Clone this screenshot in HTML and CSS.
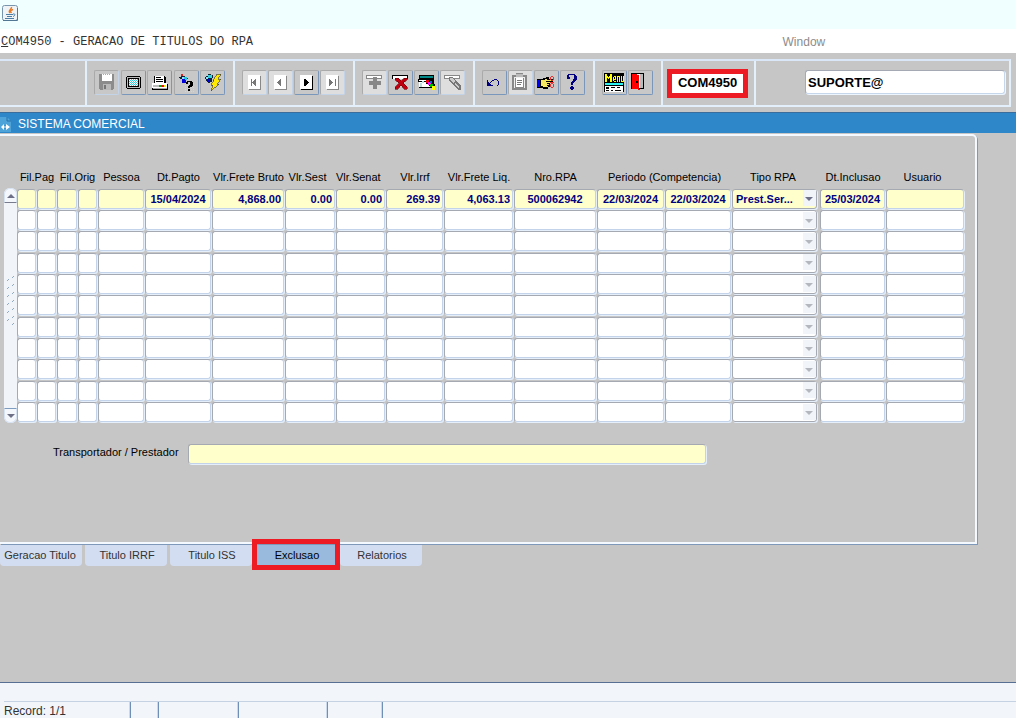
FILE: index.html
```html
<!DOCTYPE html>
<html lang="pt-BR">
<head>
<meta charset="utf-8">
<title>COM4950 - Geracao de Titulos do RPA</title>
<link rel="stylesheet" href="styles.css">
</head>
<body>
<header class="titlebar">
  <svg class="java" width="18" height="18" viewBox="0 0 18 18" aria-hidden="true">
    <rect x="1.500" y="1.500" width="15" height="15" rx="2" fill="#f0f3f6" stroke="#7995ad"/>
    <path d="M2 16.500h14.500V4" fill="none" stroke="#517795"/>
    <path d="M10.500 3C11 5.500 6.500 6 9 9M12 5.500c-3 1-3 2-1.500 3.500" fill="none" stroke="#e87b25" stroke-width="1.500"/>
    <path d="M5 10.500h7M6 12.500h5M4 14.500h9" fill="none" stroke="#4d7ca5" stroke-width="1.200"/>
    <path d="M12 10c3-.5 2 2 0 2.500" fill="none" stroke="#4d7ca5"/>
  </svg>
</header>
<nav class="menubar">
  <span class="menu-title"><u>C</u>OM4950 - GERACAO DE TITULOS DO RPA</span>
  <button class="menu-window" type="button">Window</button>
</nav>

<div class="toolbar">
  <div class="seg seg-blank"></div>
  <div class="seg seg-five">
    <button class="tool off" type="button" aria-label="Salvar"><svg viewBox="0 0 24 24"><path d="M5 4h15v15h-1v1H6v-1H5z" fill="#8c8c8c"/><path d="M8 4h10v7H8z" fill="#fff"/><path d="M9 4h1v1H9zm2 0h1v1h-1zm2 0h1v1h-1zm2 0h1v1h-1z" fill="#aaa"/><path d="M9 14h8v6H9z" fill="#b9b9b9"/><path d="M10 15h2v4h-2z" fill="#777"/></svg></button>
    <button class="tool" type="button" aria-label="Tela"><svg viewBox="0 0 24 24"><path d="M6 6h13v1h1v11h-1v1H6v-1H5V7h1z" fill="#000"/><path d="M6 7h13v11H6z" fill="#bbb"/><path d="M7 8h11v9H7z" fill="#000"/><path d="M8 9h9v7H8z" fill="#fff"/><path d="M8 9.500h9M8 11.500h9M8 13.500h9M8 15.500h9" stroke="#39cfdc" stroke-dasharray="1 1"/><path d="M9 10.500h8M9 12.500h8M9 14.500h8" stroke="#39cfdc" stroke-dasharray="1 1"/></svg></button>
    <button class="tool" type="button" aria-label="Imprimir"><svg viewBox="0 0 24 24"><path d="M7 6h11v1h1v7H7z" fill="#000"/><path d="M8 6h9v7H8z" fill="#fff"/><path d="M9 7h5v1H9zm0 2h7v1H9zm0 2h7v1H9z" fill="#000"/><path d="M5 14h16v6H5z" fill="#000"/><path d="M5 13h15v5H5z" fill="#fff"/><path d="M6 15h13v2H6z" fill="#bbb"/><path d="M12 15h3v2h-3z" fill="#16a512"/><path d="M15 15h2v2h-2z" fill="#f00"/><path d="M17 15h2v2h-2z" fill="#ff0"/><path d="M6 18h14v1H6z" fill="#aaa"/></svg></button>
    <button class="tool" type="button" aria-label="Consultar"><svg viewBox="0 0 24 24"><path d="M7 5h2v1h2v1h2v1h1v1h-2v4h-2v-2H8V9H6V8H5V7h2z" fill="#123"/><path d="M7 4h2v2H7z" fill="#d22"/><path d="M8 7h2v2H8z" fill="#9df"/><path d="M10 7h3v3h-3z" fill="#2cc6df"/><path d="M8 9h3v4H8z" fill="#00d"/><path d="M11 13.500h10M11 15.500h10M11 17.500h10M11 19.500h10M11 21.500h9" stroke="#f5ec00" stroke-dasharray="1 1"/><path d="M13 11h5v1h1v4h-1v1h-2v1h-2v-2h1v-1h1v-3h-2v2h-2v-2h1zm1 8h2v2h-2z" fill="#000"/></svg></button>
    <button class="tool" type="button" aria-label="Executar consulta"><svg viewBox="0 0 24 24"><path d="M8 4h3v1h2v3h-1v4h-2v1H8v-2H6V9H5V7h1V6h2z" fill="#123"/><path d="M8 5h4v3H8z" fill="#39cfdc"/><path d="M6 7h2v2H6z" fill="#9df"/><path d="M7 9h3v3H7z" fill="#00d"/><path d="M17 4h4l-3 5h3l-4 5h2l-8 7 2-6h-2l3-5h-1z" fill="#ffea00" stroke="#333" stroke-width=".6"/></svg></button>
  </div>
  <div class="seg">
    <button class="tool off" type="button" aria-label="Primeiro"><svg viewBox="0 0 24 24"><path d="M7 6h12v14H7z" fill="#888"/><path d="M6 5h12v14H6z" fill="#fff"/><path d="M9 9h1v7H9zM14 9v7l-4-3v-1z" fill="#777"/></svg></button>
    <button class="tool off" type="button" aria-label="Anterior"><svg viewBox="0 0 24 24"><path d="M7 6h12v14H7z" fill="#888"/><path d="M6 5h12v14H6z" fill="#fff"/><path d="M13 9v7l-4-3v-1z" fill="#777"/></svg></button>
    <button class="tool" type="button" aria-label="Proximo"><svg viewBox="0 0 24 24"><path d="M7 6h12v14H7z" fill="#000"/><path d="M6 5h12v14H6z" fill="#fff"/><path d="M10 9v7h1l4-3v-1l-4-3z" fill="#000"/></svg></button>
    <button class="tool off" type="button" aria-label="Ultimo"><svg viewBox="0 0 24 24"><path d="M7 6h12v14H7z" fill="#888"/><path d="M6 5h12v14H6z" fill="#fff"/><path d="M9 9v7l4-3v-1zM15 9h1v7h-1z" fill="#777"/></svg></button>
  </div>
  <div class="seg">
    <button class="tool off" type="button" aria-label="Inserir"><svg viewBox="0 0 24 24"><path d="M4 5h16v4H4z" fill="#888"/><path d="M5 6h14v2H5z" fill="#fff"/><path d="M11 7h4v4h4v4h-4v4h-4v-4H7v-4h4z" fill="#888"/></svg></button>
    <button class="tool" type="button" aria-label="Excluir"><svg viewBox="0 0 24 24"><path d="M4 5h16v4H4z" fill="#000"/><path d="M5 6h14v3H5z" fill="#fff"/><path d="M7 8h3l3 3 3-3h3v2l-4 3 4 4v2h-3l-3-4-3 4H7v-2l4-4-4-3z" fill="#c00010" stroke="#600" stroke-width=".6"/></svg></button>
    <button class="tool" type="button" aria-label="Limpar bloco"><svg viewBox="0 0 24 24"><path d="M5 5h15v13H5z" fill="#000"/><path d="M6 6h13v2H6z" fill="#088"/><path d="M4 9h15v3H4z" fill="#000"/><path d="M5 10h12v1H5z" fill="#fff"/><path d="M5 12h12v5H5z" fill="#fff"/><path d="M8 11h2v2H8zm-2 2h2v4H6z" fill="#b8dada"/><path d="M12 9h5v2h2v3h2v4h-3v-2h-3v-2h-3z" fill="#000"/><path d="M12 10h3v3h-3z" fill="#e00"/><path d="M14 12h3v3h-3z" fill="#f0f"/><path d="M16 11h2v2h-2z" fill="#06d"/><path d="M16 14h3v3h-3z" fill="#0b0"/><path d="M18 16h3v4h-3z" fill="#ff0"/></svg></button>
    <button class="tool off" type="button" aria-label="Limpar registro"><svg viewBox="0 0 24 24"><path d="M4 5h16v4H4z" fill="#888"/><path d="M5 6h14v2H5z" fill="#fff"/><path d="M9 7h4l8 9v4h-3l-8-9H9z" fill="#777"/><path d="M10 8h2l3 3-2 2-3-3zm5 5 4 4-1 1-4-4z" fill="#ccc"/></svg></button>
  </div>
  <div class="seg">
    <button class="tool" type="button" aria-label="Desfazer"><svg viewBox="0 0 24 24"><path d="M5 10h1v2h1v1h1v1h1v1h2v1H5z" fill="#000080"/><path d="M8 12h1v-1h1v-1h2V9h3v1h1v1h1v4h-1v1h-1v-1h1v-4h-1v-1h-3v1h-2v1H9v1H8z" fill="#000080"/></svg></button>
    <button class="tool off" type="button" aria-label="Lista"><svg viewBox="0 0 24 24"><path d="M4 5h4V3h7v2h4v15H4z" fill="#888"/><path d="M6 7h11v11H6z" fill="#eee"/><path d="M8 4h7v3H8z" fill="#bbb"/><path d="M7 8h9v10H7z" fill="#888"/><path d="M8 8h7v9H8z" fill="#fff"/><path d="M9 10h5v1H9zm0 2h5v1H9zm0 2h4v1H9z" fill="#777"/></svg></button>
    <button class="tool" type="button" aria-label="Editar"><svg viewBox="0 0 24 24"><path d="M3 9h4v9H3z" fill="#000"/><path d="M3 10h3v7H3z" fill="#00f"/><path d="M7 9h2V8h3V7h3v2h4v4h-3v4h-2v2H9v-1H7z" fill="#000"/><path d="M7 10h4V9h2v1h5v1h-6v1h4v1h-3v1h2v1h-2v1h1v1h-5v-1H7z" fill="#f5e660"/><path d="M17 6.500h2M16.500 7v3M19.500 7v3M17 10.500h2M17 13.500h2M16.500 14v3M19.500 14v3M17 17.500h2M16 12.500h4" fill="none" stroke="#f03030"/></svg></button>
    <button class="tool" type="button" aria-label="Ajuda"><svg viewBox="0 0 24 24"><path d="M8 4h7v1h1v1h1v4h-1v1h-1v1h-1v1h-1v2h-2v-3h1v-1h1v-2h1V5H9v2h1v2H7V5h1zM10 17h1v-1h2v1h1v2h-1v1h-2v-1h-1z" fill="#000080"/></svg></button>
  </div>
  <div class="seg">
    <button class="tool" type="button" aria-label="Menu"><svg viewBox="0 0 24 24"><path d="M2 3h20v10H2z" fill="#000"/><path d="M3 12V4h2v2h1v1h1V6h1V4h2v8H8V8H7v1H6V8H5v4zm8-1V7h1V6h2v4h-2v1h2v1h-2v-1zm1-4v2h1V7zm3 5V6h3v6h-1V7h-1v5zm4-6h1v5h1V6h1v6h-3z" fill="#ff0"/><path d="M2 13h20v9H2z" fill="#000"/><path d="M3 13h18v2H3z" fill="#2ef3f3"/><path d="M3 16h18v6H3z" fill="#fff"/><path d="M4 17h3v2H4zm5 0h4v1H9zm6 0h3v1h-3zM4 20h3v1H4zm5 0h2v1H9zm4 0h6v1h-6z" fill="#000"/></svg></button>
    <button class="tool" type="button" aria-label="Sair"><svg viewBox="0 0 24 24"><path d="M3 3h13v16H3z" fill="#000"/><path d="M8 4h7v14H8z" fill="#fff"/><path d="M12 4h3v14h-3z" fill="#bbb"/><path d="M4 4h5v1h2v14h1v1h-2v-1H4z" fill="#f00"/><path d="M8 11h2v2H8z" fill="#000"/></svg></button>
  </div>
  <div class="seg seg-code">
    <input class="code" type="text" value="COM4950" aria-label="Codigo do programa">
  </div>
  <div class="seg seg-user">
    <input class="user" type="text" value="SUPORTE@" aria-label="Usuario conectado">
  </div>
</div>

<h1 class="caption">
  <svg width="12" height="16" viewBox="0 0 12 16" aria-hidden="true"><path d="M0 1h7l4 4v11H0z" fill="#4ea3d8"/><path d="M7 1v4h4" fill="none" stroke="#2673aa"/><path d="M1 11l3-3v2h2V8l4 3-4 3v-2H4v2z" fill="#fff"/><path d="M5 9v4" stroke="#2a84c4"/></svg>
  SISTEMA COMERCIAL
</h1>

<main class="panel">
  <div class="records">
    <div class="scrollbar">
      <button class="scroll-btn up" type="button" aria-label="Rolar para cima"></button>
      <svg class="grip" width="10" height="52" viewBox="0 0 10 52" aria-hidden="true"><path d="M1 6l2-2M6 3l2-2M1 14l2-2M6 11l2-2M1 22l2-2M6 19l2-2M1 30l2-2M6 27l2-2M1 38l2-2M6 35l2-2M1 46l2-2M6 43l2-2M6 50l2-2" stroke="#8fa8c4"/></svg>
      <button class="scroll-btn down" type="button" aria-label="Rolar para baixo"></button>
    </div>
    <table class="grid">
      <colgroup>
        <col class="w20"><col class="w20"><col class="w21"><col class="w20"><col class="w47"><col class="w67"><col class="w73"><col class="w51"><col class="w50"><col class="w58"><col class="w70"><col class="w83"><col class="w68"><col class="w67"><col class="w88"><col class="w66"><col class="w79">
      </colgroup>
      <thead>
        <tr>
          <th colspan="2">Fil.Pag</th><th colspan="2">Fil.Orig</th><th>Pessoa</th><th>Dt.Pagto</th><th>Vlr.Frete Bruto</th><th class="lead">Vlr.Sest</th><th class="lead">Vlr.Senat</th><th>Vlr.Irrf</th><th>Vlr.Frete Liq.</th><th>Nro.RPA</th><th colspan="2">Periodo (Competencia)</th><th class="lead">Tipo RPA</th><th>Dt.Inclusao</th><th class="lead">Usuario</th>
        </tr>
      </thead>
      <tbody id="rows"></tbody>
    </table>
  </div>
  <div class="carrier">
    <label for="carrier">Transportador / Prestador</label>
    <input id="carrier" class="field filled" type="text">
  </div>
</main>

<div class="tabs" role="tablist">
  <button class="tab" type="button" role="tab">Geracao Titulo</button>
  <button class="tab" type="button" role="tab">Titulo IRRF</button>
  <button class="tab" type="button" role="tab">Titulo ISS</button>
  <button class="tab active" type="button" role="tab" aria-selected="true">Exclusao</button>
  <button class="tab" type="button" role="tab">Relatorios</button>
</div>

<footer class="status">
  <div class="status-message"></div>
  <div class="status-row"><span>Record: 1/1</span><span></span><span></span><span></span><span></span><span></span></div>
</footer>
<script src="app.js"></script>
</body>
</html>
```

FILE: styles.css
```css
* { box-sizing: border-box; }

body {
  margin: 0;
  min-height: 100vh;
  display: flex;
  flex-direction: column;
  background: #c6c6c6;
  color: #000;
  font-family: "Liberation Sans", Arial, sans-serif;
  font-size: 11px;
  overflow-x: hidden;
}

button, input, select { font: inherit; color: inherit; margin: 0; padding: 0; }

.titlebar { height: 29px; padding: 4px 1px; background: #f0ffff; }
.java { display: block; }

.menubar {
  height: 24px;
  display: grid;
  grid-template-columns: 77% 1fr;
  align-items: center;
  background: #fff;
  padding: 2px 0 0 1px;
}
.menu-title { font-family: "Liberation Mono", monospace; font-size: 12px; color: #333; }
.menu-window { border: 0; background: none; text-align: left; font-size: 12px; color: #8c8c8c; }

.toolbar {
  display: flex;
  height: 48px;
  margin: 6px 5px 5px 0;
  border: 2px solid #e4effc;
  border-left: 0;
  border-top-color: #d9e7f8;
}
.seg {
  width: 120px;
  display: flex;
  align-items: center;
  justify-content: space-between;
  padding: 0 8px 2px 7px;
  border-left: 2px solid #e4effc;
}
.seg:nth-child(6) { width: 68px; }
.seg-blank { width: 85px; border-left: 0; }
.seg-five { width: 148px; }
.seg-code { width: 93px; padding: 0 5px 0 4px; }
.seg-user { flex: 1; justify-content: flex-end; padding-right: 4px; }

.tool {
  width: 25px;
  height: 25px;
  border: 1px solid;
  border-color: #aaa #7996bb #7996bb #aaa;
  border-radius: 2px;
  background: #c8c8c8;
}
.tool svg { display: block; width: 24px; height: 24px; margin: -1px; shape-rendering: crispEdges; }
.tool.off { background: #dedede; border-color: #aaa #c3d3e8 #c3d3e8 #aaa; }
.seg-five .off { background: #c8c8c8; }

.code, .user { font-size: 13px; font-weight: bold; background: #fff; }
.code { width: 81px; height: 29px; padding-bottom: 2px; border: 5px solid #ed1c24; text-align: center; }
.user {
  width: 200px;
  height: 24px;
  padding-left: 2px;
  border: 1px solid;
  border-color: #a4a9b4 #c6d6eb #c6d6eb #a4a9b4;
  border-radius: 3px;
  box-shadow: 1px 1px 0 #edf5ff;
}

.caption {
  display: flex;
  align-items: center;
  gap: 6px;
  height: 21px;
  margin: 0;
  padding-top: 2px;
  border-top: 1px solid #3a6d9c;
  background: #2d87c9;
  color: #fff;
  font-size: 12px;
  font-weight: normal;
}

.panel {
  width: max-content;
  padding: 32px 10px 78px 4px;
  margin-top: 1px;
  border: solid #f4f9ff;
  border-width: 2px 2px 2px 0;
  border-radius: 0 5px 0 0;
  box-shadow: 1px 1px 0 #7d98b9;
}

.records { display: flex; align-items: flex-end; }

.scrollbar {
  width: 13px;
  height: 235px;
  display: flex;
  flex-direction: column;
  justify-content: space-between;
  align-items: center;
  border-radius: 6px;
  background: #f1f5fa;
}
.grip { margin-bottom: 10px; }
.scroll-btn {
  width: 13px;
  height: 15px;
  display: grid;
  place-items: center;
  border: 1px solid #d5e2f2;
  background: #f4f8fd;
}
.scroll-btn::after { content: ""; border: 4px solid transparent; border-top: 0; border-bottom-color: #6e7087; }
.up { border-radius: 6px 6px 0 0; border-bottom-color: #777b8c; }
.down { border-radius: 0 0 6px 6px; border-top-color: #7d9cc0; }
.scroll-btn.down::after { border: 4px solid transparent; border-bottom: 0; border-top-color: #6e7087; }

.grid { width: 948px; border-collapse: collapse; table-layout: fixed; }
.grid th { height: 20px; padding: 0 0 2px; font-weight: normal; white-space: nowrap; }
.grid th.lead { padding: 0 6px 2px 0; }
.grid td { height: 21px; padding: 0 1px 1px 0; position: relative; }
.grid tr:nth-child(3n + 1) td { height: 22px; }
.grid .type { padding-right: 3px; }
.w20 { width: 20px; }
.w21 { width: 21px; }
.w47 { width: 47px; }
.w50 { width: 50px; }
.w51 { width: 51px; }
.w58 { width: 58px; }
.w66 { width: 66px; }
.w67 { width: 67px; }
.w68 { width: 68px; }
.w70 { width: 70px; }
.w73 { width: 73px; }
.w79 { width: 79px; }
.w83 { width: 83px; }
.w88 { width: 88px; }

.field {
  display: block;
  width: 100%;
  height: 20px;
  padding: 0 3px;
  border: 1px solid;
  border-color: #a5a9b1 #c2d3ea #c2d3ea #a5a9b1;
  border-radius: 3px;
  box-shadow: 1px 1px 0 #e4effb;
  background: #fff;
  color: #000080;
  font-weight: bold;
  text-align: center;
}
.field.number { text-align: right; padding-right: 2px; }
.field.filled { background: #ffffcc; }
select.field { appearance: none; text-align: left; border-color: #a5a9b1; }
.type::after {
  content: "";
  position: absolute;
  top: 2px;
  right: 4px;
  width: 13px;
  height: 16px;
  background: #f1f5fa;
  pointer-events: none;
}
.type::before {
  content: "";
  position: absolute;
  z-index: 1;
  top: 9px;
  right: 7px;
  border: 4px solid transparent;
  border-bottom: 0;
  border-top-color: #b4b7bd;
  pointer-events: none;
}
.current .type::before { border-top-color: #6e7087; }

.carrier { display: flex; align-items: center; margin-top: 21px; padding-left: 49px; }
.carrier label { width: 135px; padding-bottom: 4px; }
.carrier .field { width: 518px; }

.tabs { display: flex; gap: 3px; margin-top: 1px; }
.tab {
  position: relative;
  width: 82px;
  height: 21px;
  padding: 0 0 2px 2px;
  border: 0;
  border-radius: 0 0 4px 4px;
  background: #d2ddf2;
  color: #333;
}
.tab:first-child { padding-right: 4px; }
.tab.active { background: #99badd; color: #000; }
.tab.active::after { content: ""; position: absolute; inset: -6px -3px -4px; border: 5px solid #ed1c24; }

.status { margin-top: auto; border-top: 1px solid #566f92; background: #f2f6fb; color: #333; font-size: 12px; }
.status-message { height: 19px; margin-left: 4px; border-bottom: 1px solid #c5d2e3; }
.status-row { display: grid; grid-template-columns: 131px 28px 80px 89px 55px 1fr; height: 16px; line-height: 18px; }
.status-row span { border-right: 1px solid #6f8fb8; box-shadow: inset -1px 0 #c9d8ea; height: 16px; }
.status-row span:first-child { padding-left: 4px; }
.status-row span:last-child { border: 0; box-shadow: none; }
```

FILE: app.js
```js
const columns = [
  { name: 'Fil.Pag empresa' }, { name: 'Fil.Pag' },
  { name: 'Fil.Orig empresa' }, { name: 'Fil.Orig' },
  { name: 'Pessoa' },
  { name: 'Dt.Pagto', value: '15/04/2024' },
  { name: 'Vlr.Frete Bruto', value: '4,868.00', kind: 'number' },
  { name: 'Vlr.Sest', value: '0.00', kind: 'number' },
  { name: 'Vlr.Senat', value: '0.00', kind: 'number' },
  { name: 'Vlr.Irrf', value: '269.39', kind: 'number' },
  { name: 'Vlr.Frete Liq.', value: '4,063.13', kind: 'number' },
  { name: 'Nro.RPA', value: '500062942' },
  { name: 'Periodo inicial', value: '22/03/2024' },
  { name: 'Periodo final', value: '22/03/2024' },
  { name: 'Tipo RPA', value: 'Prest.Ser...', kind: 'type' },
  { name: 'Dt.Inclusao', value: '25/03/2024' },
  { name: 'Usuario' }
];

const body = document.getElementById('rows');

for (let r = 0; r < 11; r++) {
  const row = body.insertRow();
  if (r === 0) row.className = 'current';
  for (const column of columns) {
    const cell = row.insertCell();
    const isType = column.kind === 'type';
    const value = r === 0 ? column.value || '' : '';
    const field = document.createElement(isType ? 'select' : 'input');
    if (isType) {
      cell.className = 'type';
      field.add(new Option(value));
    } else {
      field.type = 'text';
      field.value = value;
    }
    field.className = 'field';
    field.classList.toggle('filled', r === 0);
    field.classList.toggle('number', column.kind === 'number');
    field.setAttribute('aria-label', `${column.name}, linha ${r + 1}`);
    cell.append(field);
  }
}
```
